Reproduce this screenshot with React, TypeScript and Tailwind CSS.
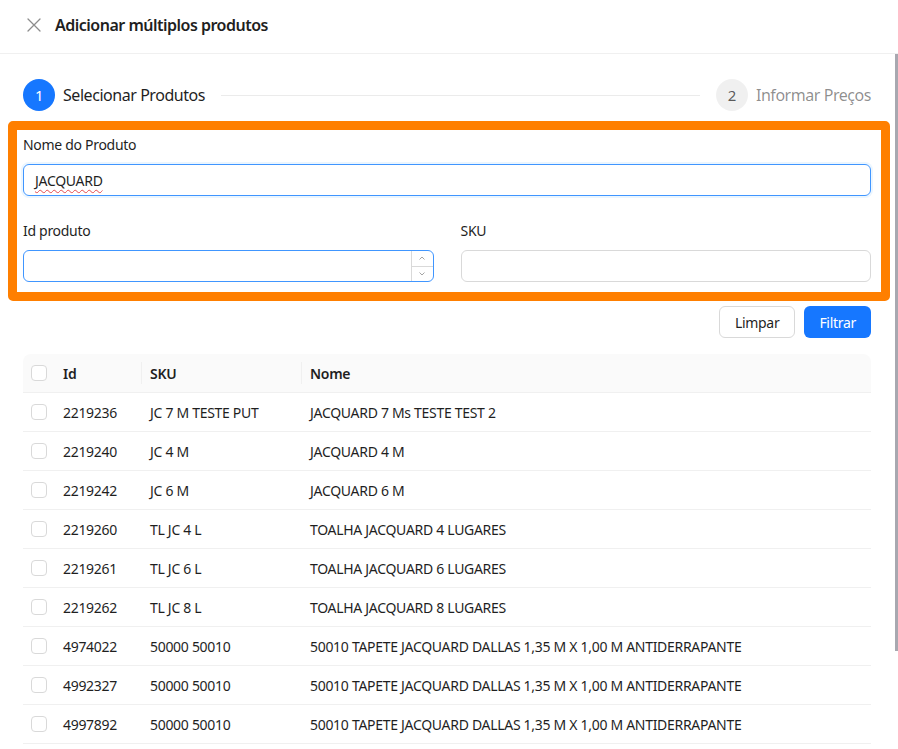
import React from 'react'

type Row = { id: string; sku: string; nome: string }

const rows: Row[] = [
  { id: '2219236', sku: 'JC 7 M TESTE PUT', nome: 'JACQUARD 7 Ms TESTE TEST 2' },
  { id: '2219240', sku: 'JC 4 M', nome: 'JACQUARD 4 M' },
  { id: '2219242', sku: 'JC 6 M', nome: 'JACQUARD 6 M' },
  { id: '2219260', sku: 'TL JC 4 L', nome: 'TOALHA JACQUARD 4 LUGARES' },
  { id: '2219261', sku: 'TL JC 6 L', nome: 'TOALHA JACQUARD 6 LUGARES' },
  { id: '2219262', sku: 'TL JC 8 L', nome: 'TOALHA JACQUARD 8 LUGARES' },
  { id: '4974022', sku: '50000 50010', nome: '50010 TAPETE JACQUARD DALLAS 1,35 M X 1,00 M ANTIDERRAPANTE' },
  { id: '4992327', sku: '50000 50010', nome: '50010 TAPETE JACQUARD DALLAS 1,35 M X 1,00 M ANTIDERRAPANTE' },
  { id: '4997892', sku: '50000 50010', nome: '50010 TAPETE JACQUARD DALLAS 1,35 M X 1,00 M ANTIDERRAPANTE' },
]

function Checkbox() {
  return <span className="block w-4 h-4 rounded-[4px] border border-[#d9d9d9] bg-white" />
}

function Chevron({ up }: { up?: boolean }) {
  return (
    <svg width="8" height="8" viewBox="0 0 8 8" className="text-black/40">
      <path d={up ? 'M1.5 5.5 4 3l2.5 2.5' : 'M1.5 2.5 4 5l2.5-2.5'} fill="none" stroke="currentColor" strokeWidth="0.9" />
    </svg>
  )
}

export default function App() {
  return (
    <div className="w-[898px] h-[749px] overflow-hidden bg-white flex flex-col font-['Noto_Sans',sans-serif] text-[14px] tracking-[-0.3px] text-[#1f1f1f]">
      {/* Header */}
      <div className="h-[54px] shrink-0 border-b border-[#f0f0f0] flex items-center pb-[3px] pl-[27px] gap-[14px]">
        <svg width="14" height="14" viewBox="0 0 14 14" className="text-black/45">
          <path d="M1 1l12 12M13 1 1 13" stroke="currentColor" strokeWidth="1.3" strokeLinecap="round" />
        </svg>
        <span className="text-[16px] font-semibold leading-6 tracking-[-0.5px] text-[#1f1f1f]">Adicionar múltiplos produtos</span>
      </div>

      <div className="flex flex-1 min-h-0">
        <div className="flex-1 min-w-0 pl-[23px] pr-[22px] pt-[25px]">
          {/* Steps */}
          <div className="flex items-center h-8 text-[16px] tracking-[-0.45px]">
            <span className="w-8 h-8 rounded-full bg-[#1677ff] text-white flex items-center justify-center text-[15px]">1</span>
            <span className="ml-2 text-[#1f1f1f]">Selecionar Produtos</span>
            <span className="flex-1 h-px bg-[#ebebeb] mx-4" />
            <span className="w-8 h-8 rounded-full bg-black/[0.06] text-black/65 flex items-center justify-center text-[15px]">2</span>
            <span className="ml-2 text-black/45">Informar Preços</span>
          </div>

          {/* Filters */}
          <div className="-ml-[15px] -mr-[19px] mt-[10px] border-[9px] border-[#ff7f00] rounded-[5px] pt-[4px] pb-[10px] pl-[6px] pr-[10px]">
            <div className="leading-[22px]">Nome do Produto</div>
            <div className="mt-2 h-8 rounded-[6px] border border-[#4096ff] shadow-[0_0_0_2px_rgba(5,145,255,0.08)] px-[11px] flex items-center">
              <span className="underline decoration-wavy decoration-[#e5484d] decoration-1 underline-offset-[3px]">JACQUARD</span>
            </div>
            <div className="grid grid-cols-2 gap-x-[27px] mt-6">
              <div>
                <div className="leading-[22px]">Id produto</div>
                <div className="mt-2 h-8 rounded-[6px] border border-[#4096ff] flex">
                  <div className="flex-1" />
                  <div className="w-[22px] border-l border-[#d9d9d9] flex flex-col">
                    <div className="flex-1 flex items-center justify-center border-b border-[#d9d9d9]">
                      <Chevron up />
                    </div>
                    <div className="flex-1 flex items-center justify-center">
                      <Chevron />
                    </div>
                  </div>
                </div>
              </div>
              <div>
                <div className="leading-[22px]">SKU</div>
                <div className="mt-2 h-8 rounded-[6px] border border-[#d9d9d9]" />
              </div>
            </div>
          </div>

          {/* Actions */}
          <div className="mt-[5px] flex justify-end gap-[9px]">
            <button className="h-8 px-[15px] rounded-[6px] border border-[#d9d9d9] bg-white text-[#1f1f1f]">Limpar</button>
            <button className="h-8 px-[15px] rounded-[6px] bg-[#1677ff] text-white">Filtrar</button>
          </div>

          {/* Table */}
          <div className="mt-4">
            <div className="flex h-[39px] bg-[#fafafa] rounded-t-[8px] border-b border-[#f0f0f0] font-semibold items-center">
              <div className="w-8 pl-2"><Checkbox /></div>
              <div className="w-[87px] pl-2 relative">Id<span className="absolute right-0 top-1/2 -translate-y-1/2 w-px h-[22px] bg-[#f0f0f0]" /></div>
              <div className="w-[160px] pl-2 relative">SKU<span className="absolute right-0 top-1/2 -translate-y-1/2 w-px h-[22px] bg-[#f0f0f0]" /></div>
              <div className="flex-1 pl-2">Nome</div>
            </div>
            {rows.map((r, i) => (
              <div key={i} className="flex h-[39px] border-b border-[#f0f0f0] items-center">
                <div className="w-8 pl-2"><Checkbox /></div>
                <div className="w-[87px] pl-2">{r.id}</div>
                <div className="w-[160px] pl-2 whitespace-nowrap">{r.sku}</div>
                <div className="flex-1 pl-2 whitespace-nowrap">{r.nome}</div>
              </div>
            ))}
          </div>
        </div>

        {/* Scrollbar */}
        <div className="w-[5px] shrink-0">
          <div className="ml-[2px] w-[3px] h-[597px] bg-[#a8a8b0]" />
        </div>
      </div>
    </div>
  )
}
